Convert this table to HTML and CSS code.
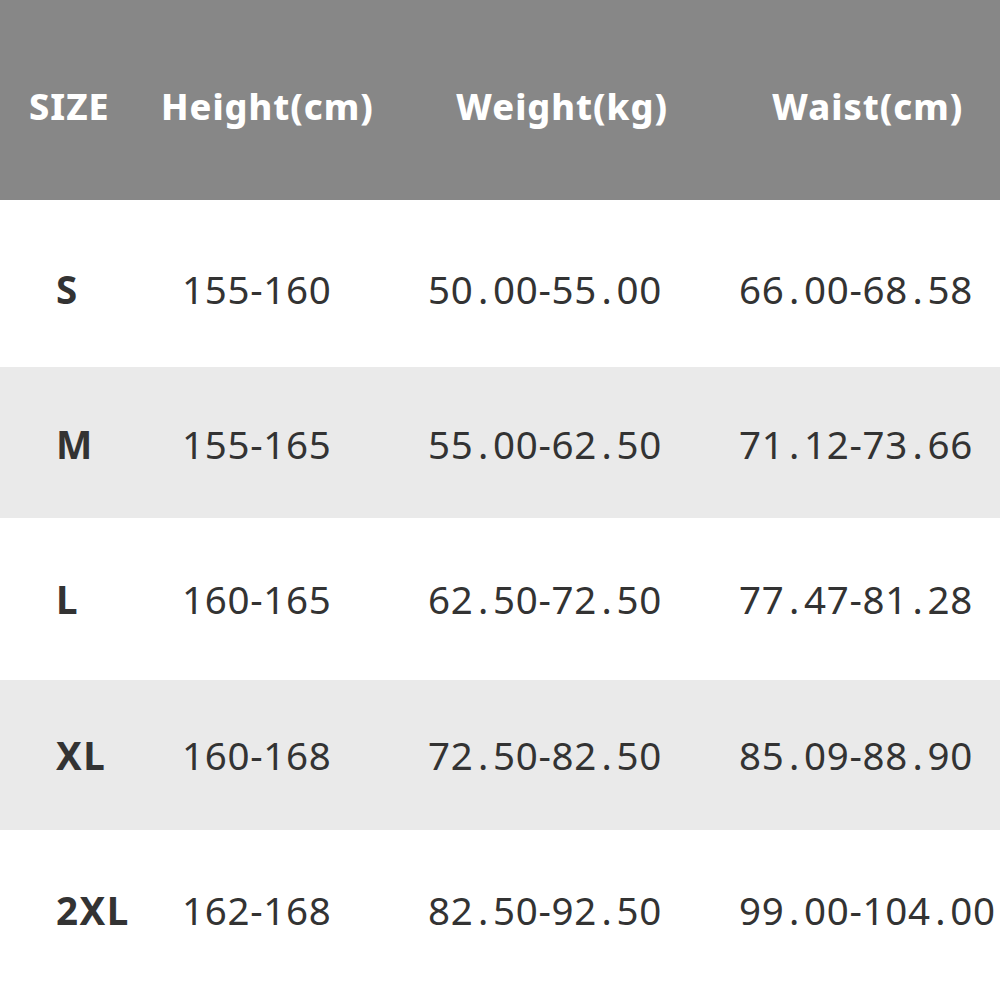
FILE: index.html
```html
<!DOCTYPE html>
<html>
<head>
<meta charset="utf-8">
<link rel="stylesheet" href="styles.css">
</head>
<body>
<div class="chart">
  <div class="row head">
    <div class="c1">SIZE</div>
    <div class="c2">Height(cm)</div>
    <div class="c3">Weight(kg)</div>
    <div class="c4">Waist(cm)</div>
  </div>
  <div class="row body r1">
    <div class="c1 size">S</div>
    <div class="c2">155-160</div>
    <div class="c3">50<span class="pt">.</span>00-55<span class="pt">.</span>00</div>
    <div class="c4">66<span class="pt">.</span>00-68<span class="pt">.</span>58</div>
  </div>
  <div class="row body r2 alt">
    <div class="c1 size">M</div>
    <div class="c2">155-165</div>
    <div class="c3">55<span class="pt">.</span>00-62<span class="pt">.</span>50</div>
    <div class="c4">71<span class="pt">.</span>12-73<span class="pt">.</span>66</div>
  </div>
  <div class="row body r3">
    <div class="c1 size">L</div>
    <div class="c2">160-165</div>
    <div class="c3">62<span class="pt">.</span>50-72<span class="pt">.</span>50</div>
    <div class="c4">77<span class="pt">.</span>47-81<span class="pt">.</span>28</div>
  </div>
  <div class="row body r4 alt">
    <div class="c1 size">XL</div>
    <div class="c2">160-168</div>
    <div class="c3">72<span class="pt">.</span>50-82<span class="pt">.</span>50</div>
    <div class="c4">85<span class="pt">.</span>09-88<span class="pt">.</span>90</div>
  </div>
  <div class="row body r5">
    <div class="c1 size">2XL</div>
    <div class="c2">162-168</div>
    <div class="c3">82<span class="pt">.</span>50-92<span class="pt">.</span>50</div>
    <div class="c4">99<span class="pt">.</span>00-104<span class="pt">.</span>00</div>
  </div>
</div>
</body>
</html>
```

FILE: styles.css
```css
html, body {
  margin: 0;
  padding: 0;
  background: #ffffff;
}
.chart {
  width: 1000px;
  height: 1000px;
  overflow: hidden;
  font-family: "Noto Sans", "Open Sans", sans-serif;
}
.row {
  display: grid;
  align-items: center;
  white-space: nowrap;
  box-sizing: border-box;
}
.head {
  height: 200px;
  background: #878787;
  color: #ffffff;
  font-weight: 800;
  font-size: 36px;
  letter-spacing: 1px;
  grid-template-columns: 132px 295px 316px 1fr;
  padding-left: 29px;
  padding-top: 12px;
}
.body {
  color: #333333;
  font-size: 38.5px;
  letter-spacing: 0.7px;
  grid-template-columns: 126px 246px 311px 1fr;
  padding-left: 56px;
}
.pt {
  margin: 0 4px 0 4.5px;
}
.alt {
  background: #eaeaea;
}
.size {
  font-weight: 700;
  letter-spacing: 1.5px;
}
.r1 { height: 167px; padding-top: 10px; }
.r2 { height: 151px; padding-top: 2px; }
.r3 { height: 162px; padding-top: 0; }
.r4 { height: 150px; padding-top: 0; }
.r5 { height: 170px; padding-bottom: 10px; }
```
